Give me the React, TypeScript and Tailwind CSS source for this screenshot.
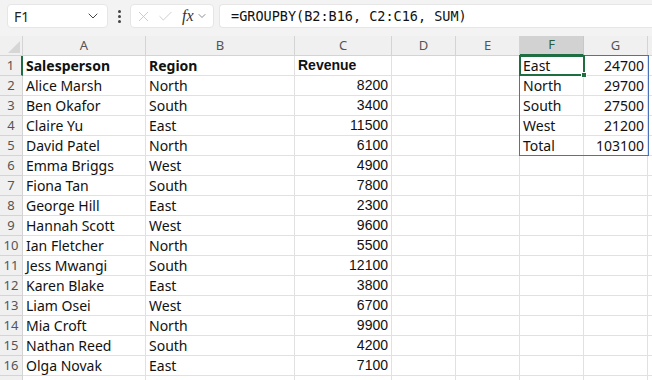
import { ChevronDown, X, Check } from "lucide-react";

const ROWS: [string, string, string][] = [
  ["Salesperson", "Region", "Revenue"],
  ["Alice Marsh", "North", "8200"],
  ["Ben Okafor", "South", "3400"],
  ["Claire Yu", "East", "11500"],
  ["David Patel", "North", "6100"],
  ["Emma Briggs", "West", "4900"],
  ["Fiona Tan", "South", "7800"],
  ["George Hill", "East", "2300"],
  ["Hannah Scott", "West", "9600"],
  ["Ian Fletcher", "North", "5500"],
  ["Jess Mwangi", "South", "12100"],
  ["Karen Blake", "East", "3800"],
  ["Liam Osei", "West", "6700"],
  ["Mia Croft", "North", "9900"],
  ["Nathan Reed", "South", "4200"],
  ["Olga Novak", "East", "7100"],
  ["", "", ""],
];

const SPILL: [string, string][] = [
  ["East", "24700"],
  ["North", "29700"],
  ["South", "27500"],
  ["West", "21200"],
  ["Total", "103100"],
];

const COLS = ["A", "B", "C", "D", "E", "F", "G", ""];
const cellFont = { fontFamily: "'Noto Sans', 'Open Sans', sans-serif" };

export default function App() {
  return (
    <div className="w-[652px] h-[380px] overflow-hidden bg-white relative" style={cellFont}>
      {/* Toolbar */}
      <div className="h-[36px] bg-[#f3f3f3] flex items-start pt-[4px] gap-[5px] pl-[7px] pr-0">
        <div className="h-[24px] w-[101px] bg-white rounded-[4px] border border-[#e6e6e6] flex items-center justify-between px-[6px]">
          <span className="text-[14px] text-[#222]">F1</span>
          <ChevronDown className="w-4 h-4 text-[#444]" strokeWidth={1.5} />
        </div>
        <div className="w-[12px] h-[24px] flex flex-col items-center justify-center gap-[2px]">
          <span className="w-[3px] h-[3px] rounded-full bg-[#444]" />
          <span className="w-[3px] h-[3px] rounded-full bg-[#444]" />
          <span className="w-[3px] h-[3px] rounded-full bg-[#444]" />
        </div>
        <div className="h-[24px] w-[84px] bg-white rounded-[4px] border border-[#e6e6e6] flex items-center px-[4px] gap-[5px]">
          <X className="w-[17px] h-[17px] text-[#c4c4c4]" strokeWidth={1.2} />
          <Check className="w-[17px] h-[17px] text-[#c4c4c4]" strokeWidth={1.2} />
          <span className="text-[16px] italic text-[#333] ml-[3px]" style={{ fontFamily: "'Liberation Serif', serif" }}>fx</span>
          <ChevronDown className="w-3 h-3 text-[#666] -ml-[3px]" strokeWidth={1.5} />
        </div>
        <div className="h-[24px] flex-1 bg-white rounded-l-[4px] border border-r-0 border-[#e6e6e6] flex items-center pl-[11px]">
          <span className="text-[#111]" style={{ fontFamily: "'DejaVu Sans Mono', monospace", fontSize: "13.5px" }}>
            =GROUPBY(B2:B16, C2:C16, SUM)
          </span>
        </div>
      </div>

      {/* Grid */}
      <div className="grid grid-cols-[23px_123px_149px_97px_64px_64px_64px_64px_20px] grid-rows-[20px_repeat(17,20px)]">
        {/* header row */}
        <div className="bg-[#f0f0f0] border-b border-r border-[#d4d4d4] relative">
          <div className="absolute right-[2px] bottom-[2px] w-0 h-0 border-l-[12px] border-l-transparent border-b-[12px] border-b-[#d6d6d6]" />
        </div>
        {COLS.map((c, i) => (
          <div
            key={i}
            className={
              c === "F"
                ? "bg-[#d2d2d2] border-b-2 border-b-[#1e6e42] border-r border-r-[#c8c8c8] flex items-center justify-center text-[13px] text-[#2b5c3c]"
                : "bg-[#f0f0f0] border-b border-r border-[#d4d4d4] flex items-center justify-center text-[13px] text-[#555]"
            }
          >
            {c}
          </div>
        ))}
        {ROWS.map((r, ri) => {
          const rowNo = ri + 1;
          return [
            <div
              key={`h${ri}`}
              className={
                rowNo === 1
                  ? "bg-[#f0f0f0] border-b border-[#d4d4d4] border-r-2 border-r-[#1e6e42] flex items-center justify-center text-[13px] text-[#555]"
                  : "bg-[#f0f0f0] border-b border-r border-[#d4d4d4] flex items-center justify-center text-[13px] text-[#555]"
              }
            >
              {rowNo <= 16 ? rowNo : ""}
            </div>,
            <div key={`a${ri}`} className={`border-b border-r border-[#e1e1e1] flex items-center pl-[3px] text-[14px] text-[#111] whitespace-nowrap ${rowNo === 1 ? "font-bold" : ""}`}>
              {r[0]}
            </div>,
            <div key={`b${ri}`} className={`border-b border-r border-[#e1e1e1] flex items-center pl-[3px] text-[14px] text-[#111] whitespace-nowrap ${rowNo === 1 ? "font-bold" : ""}`}>
              {r[1]}
            </div>,
            <div
              key={`c${ri}`}
              className={`border-b border-r border-[#e1e1e1] flex items-center text-[#111] whitespace-nowrap ${rowNo === 1 ? "font-bold pl-[3px] text-[14px]" : "justify-end pr-[3px] text-[14px]"}`}
              style={{ fontFamily: "'Liberation Sans', Arial, sans-serif" }}
            >
              {r[2]}
            </div>,
            <div key={`d${ri}`} className="border-b border-r border-[#e1e1e1]" />,
            <div key={`e${ri}`} className="border-b border-r border-[#e1e1e1]" />,
            <div key={`f${ri}`} className="border-b border-r border-[#e1e1e1] flex items-center pl-[3px] text-[14px] text-[#111]">
              {ri < 5 ? SPILL[ri][0] : ""}
            </div>,
            <div key={`g${ri}`} className="border-b border-r border-[#e1e1e1] flex items-center justify-end pr-[3px] text-[14px] text-[#111]">
              {ri < 5 ? SPILL[ri][1] : ""}
            </div>,
            <div key={`x${ri}`} className="border-b border-[#e1e1e1]" />,
          ];
        })}
      </div>

      {/* spill range border F1:G5 */}
      <div className="absolute left-[519px] top-[55px] w-[130px] h-[101px] border border-[#4a72b8] pointer-events-none" />
      {/* active cell F1 */}
      <div className="absolute left-[519px] top-[55px] w-[66px] h-[21px] border-2 border-[#1e6e42] pointer-events-none" />
      <div className="absolute left-[581px] top-[72px] w-[6px] h-[6px] bg-[#1e6e42] border border-white pointer-events-none" />
    </div>
  );
}
